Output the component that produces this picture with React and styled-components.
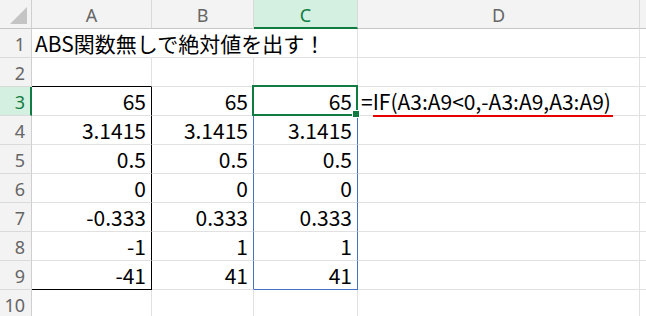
import React from 'react';
import styled, { createGlobalStyle } from 'styled-components';

const GlobalStyle = createGlobalStyle`
  html, body {
    margin: 0;
    padding: 0;
    background: #fff;
  }
  * { box-sizing: border-box; }
`;

const GRID = '#e1e1e1';
const GREEN = '#107c41';
const SEL_BG = '#d3f0e0';
const BLUE = '#4472c4';

const Sheet = styled.div`
  display: grid;
  grid-template-columns: 32px 120px 102px 104px 282px 1fr;
  grid-auto-rows: 29px;
  width: 646px;
  height: 316px;
  overflow: hidden;
  background: #fff;
`;

const Corner = styled.div`
  display: flex;
  justify-content: flex-end;
  align-items: flex-end;
  padding: 0 4px 4px 0;
  background: #f3f3f3;
  border-right: 1px solid #cfcfcf;
  border-bottom: 1px solid #c6c6c6;
`;

const ColHead = styled.div`
  display: flex;
  align-items: center;
  justify-content: center;
  padding-top: 2px;
  background: ${p => (p.$sel ? SEL_BG : '#f3f3f3')};
  color: ${p => (p.$sel ? GREEN : '#666')};
  border-right: 1px solid #dadada;
  border-bottom: ${p => (p.$sel ? `2px solid ${GREEN}` : '1px solid #c6c6c6')};
  font-family: "Noto Sans", sans-serif;
  font-size: 18px;
`;

const RowHead = styled.div`
  text-align: right;
  padding-right: ${p => (p.$sel ? '5px' : '6px')};
  background: ${p => (p.$sel ? SEL_BG : '#f3f3f3')};
  color: ${p => (p.$sel ? GREEN : '#666')};
  border-right: ${p => (p.$sel ? `2px solid ${GREEN}` : '1px solid #cfcfcf')};
  border-bottom: 1px solid #dadada;
  font-family: "Noto Sans", sans-serif;
  font-size: 18px;
  line-height: 30px;
`;

const Cell = styled.div`
  position: relative;
  padding: 0 5px 0 3px;
  border-right: 1px solid ${p => p.$right || GRID};
  border-bottom: 1px solid ${p => p.$bottom || GRID};
  text-align: ${p => (p.$num ? 'right' : 'left')};
  white-space: nowrap;
  color: #000;
  font-family: "Noto Sans CJK JP", sans-serif;
  font-size: 21px;
  line-height: 28px;

  ${p => p.$active && `
    &::before {
      content: '';
      position: absolute;
      top: -2px;
      left: -2px;
      right: -1px;
      bottom: -1px;
      border: 2px solid ${GREEN};
      pointer-events: none;
      z-index: 2;
    }
    &::after {
      content: '';
      position: absolute;
      right: -2px;
      bottom: -2px;
      width: 6px;
      height: 6px;
      background: ${GREEN};
      box-shadow: 0 0 0 1px #fff;
      z-index: 3;
    }
  `}
`;

const Underline = styled.span`
  position: absolute;
  left: 15px;
  top: 28px;
  width: 240px;
  height: 2px;
  background: #e60000;
  z-index: 4;
`;

const cols = ['A', 'B', 'C', 'D', ''];

const colA = ['65', '3.1415', '0.5', '0', '-0.333', '-1', '-41'];
const colB = ['65', '3.1415', '0.5', '0', '0.333', '1', '41'];

function cellBorders(row, col) {
  let right;
  let bottom;
  // A3:A9 black outline
  if (col === 0) {
    if (row === 1) right = 'transparent';
    if (row === 2) bottom = '#000';
    if (row >= 3 && row <= 9) right = '#000';
    if (row === 9) bottom = '#000';
  }
  // C3:C9 blue outline
  if (col === 1) {
    if (row === 1) right = 'transparent';
    if (row >= 3 && row <= 9) right = BLUE;
  }
  if (col === 2) {
    if (row === 2 || row === 9) bottom = BLUE;
    if (row >= 3 && row <= 9) right = BLUE;
  }
  return { right, bottom };
}

function cellValue(row, col) {
  if (row === 1 && col === 0) return 'ABS関数無しで絶対値を出す！';
  if (row >= 3 && row <= 9) {
    if (col === 0) return colA[row - 3];
    if (col === 1 || col === 2) return colB[row - 3];
    if (col === 3 && row === 3) return '=IF(A3:A9<0,-A3:A9,A3:A9)';
  }
  return '';
}

export default function App() {
  const rows = [1, 2, 3, 4, 5, 6, 7, 8, 9, 10];
  return (
    <>
      <GlobalStyle />
      <Sheet>
        <Corner>
          <svg width="17" height="17" viewBox="0 0 17 17">
            <polygon points="17,0 17,17 0,17" fill="#c4c4c4" />
          </svg>
        </Corner>
        {cols.map((c, i) => (
          <ColHead key={i} $sel={c === 'C'}>{c}</ColHead>
        ))}
        {rows.map(r => (
          <React.Fragment key={r}>
            <RowHead $sel={r === 3}>{r}</RowHead>
            {cols.map((c, ci) => {
              const { right, bottom } = cellBorders(r, ci);
              const value = cellValue(r, ci);
              const isFormula = ci === 3 && r === 3;
              return (
                <Cell
                  key={ci}
                  $right={right}
                  $bottom={bottom}
                  $num={r >= 3 && ci < 3}
                  $active={r === 3 && ci === 2}
                >
                  {value}
                  {isFormula && <Underline />}
                </Cell>
              );
            })}
          </React.Fragment>
        ))}
      </Sheet>
    </>
  );
}
